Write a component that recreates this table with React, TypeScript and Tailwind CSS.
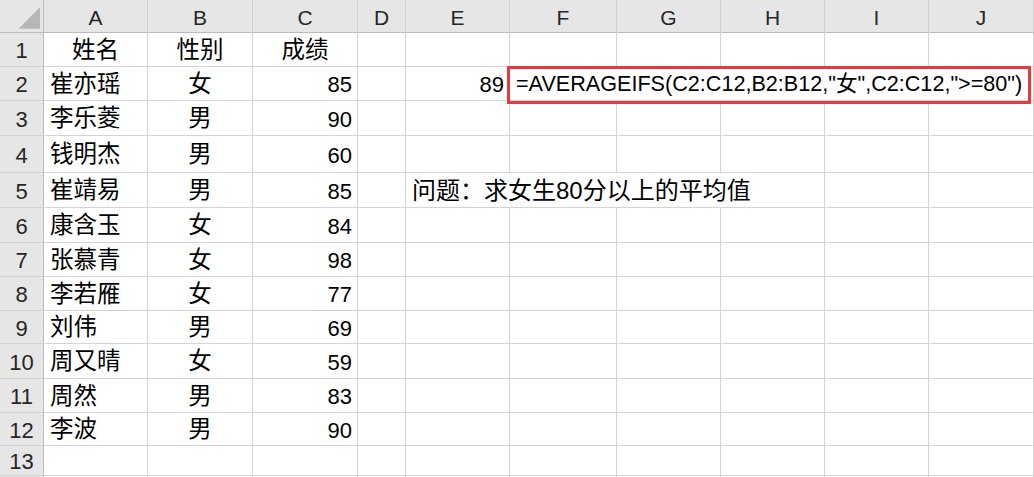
const font = "font-['Liberation_Sans','Noto_Sans_CJK_SC',sans-serif]";

const colW = [
  "w-[104px]",
  "w-[105px]",
  "w-[105px]",
  "w-[48px]",
  "w-[104px]",
  "w-[107px]",
  "w-[104px]",
  "w-[104px]",
  "w-[104px]",
  "w-[105px]",
];
const letters = ["A", "B", "C", "D", "E", "F", "G", "H", "I", "J"];

const rowH = [
  "h-[34px]",
  "h-[34px]",
  "h-[35px]",
  "h-[37px]",
  "h-[35px]",
  "h-[35px]",
  "h-[34px]",
  "h-[34px]",
  "h-[33px]",
  "h-[35px]",
  "h-[34px]",
  "h-[33px]",
  "h-[30px]",
  "h-[30px]",
];

type Cell = { text?: string; align?: "l" | "c" | "r"; noLine?: boolean; size?: string };

const students: [string, string, number][] = [
  ["崔亦瑶", "女", 85],
  ["李乐菱", "男", 90],
  ["钱明杰", "男", 60],
  ["崔靖易", "男", 85],
  ["康含玉", "女", 84],
  ["张慕青", "女", 98],
  ["李若雁", "女", 77],
  ["刘伟", "男", 69],
  ["周又晴", "女", 59],
  ["周然", "男", 83],
  ["李波", "男", 90],
];

const cjk = "text-[23.5px]";

function buildRows(): Cell[][] {
  const rows: Cell[][] = [];
  rows.push([
    { text: "姓名", align: "c", size: cjk },
    { text: "性别", align: "c", size: cjk },
    { text: "成绩", align: "c", size: cjk },
  ]);
  students.forEach(([name, sex, score]) => {
    rows.push([
      { text: name, align: "l", size: cjk },
      { text: sex, align: "c", size: cjk },
      { text: String(score), align: "r" },
    ]);
  });
  rows.push([]);
  rows.push([]);
  // row 2: E2 result, formula text spills over F2:J2
  rows[1][3] = {};
  rows[1][4] = { text: "89", align: "r" };
  rows[1][5] = {
    text: '=AVERAGEIFS(C2:C12,B2:B12,"女",C2:C12,">=80")',
    align: "l",
    noLine: true,
    size: "text-[21.6px]",
  };
  rows[1][6] = { noLine: true };
  rows[1][7] = { noLine: true };
  rows[1][8] = { noLine: true };
  // row 5: the question
  rows[4][3] = {};
  rows[4][4] = { text: "问题：求女生80分以上的平均值", align: "l", noLine: true, size: "text-[24px]" };
  rows[4][5] = { noLine: true };
  rows[4][6] = { noLine: true };
  return rows;
}

function Corner() {
  return (
    <div className="flex h-full w-[44px] shrink-0 border-b border-r border-[#bcbcbc] bg-[#e6e6e6]">
      <svg width="44" height="32" viewBox="0 0 44 32">
        <polygon points="41,7 41,29 19,29" fill="#b7b7b7" />
      </svg>
    </div>
  );
}

export default function App() {
  const rows = buildRows();
  return (
    <div className={`relative h-[477px] w-[1034px] overflow-hidden bg-white ${font}`}>
      <div className="flex h-[33px]">
        <Corner />
        {letters.map((l, i) => (
          <div
            key={l}
            className={`${colW[i]} flex h-full shrink-0 items-center justify-center border-b border-r border-b-[#bcbcbc] border-r-[#d2d2d2] bg-[#e6e6e6] pt-[3px] text-[21px] text-[#262626]`}
          >
            {l}
          </div>
        ))}
      </div>
      {rows.map((row, r) => (
        <div key={r} className={`flex ${rowH[r]}`}>
          <div className="flex h-full w-[44px] shrink-0 items-center justify-center border-b border-r border-b-[#d2d2d2] border-r-[#bcbcbc] bg-[#e6e6e6] pt-[2px] text-[22px] text-[#262626]">
            {r < 13 ? r + 1 : ""}
          </div>
          {colW.map((w, c) => {
            const cell = row[c] || {};
            const align =
              cell.align === "c" ? "justify-center" : cell.align === "r" ? "justify-end pr-[5px]" : "justify-start pl-[6px]";
            return (
              <div
                key={c}
                className={`${w} flex h-full shrink-0 items-center whitespace-nowrap border-b border-[#d4d4d4] pt-[2px] text-black ${
                  cell.size || "text-[22px]"
                } ${align} ${cell.noLine ? "" : "border-r"}`}
              >
                {cell.text}
              </div>
            );
          })}
        </div>
      ))}
      <div className="absolute left-[507px] top-[66px] h-[38px] w-[524px] border-[3px] border-[#e8393f]" />
    </div>
  );
}
